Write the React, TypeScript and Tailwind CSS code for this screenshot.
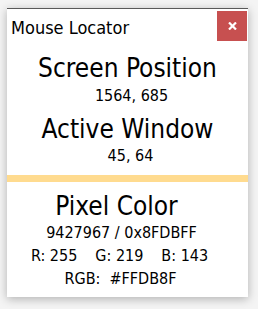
import React from "react";

export default function App() {
  return (
    <div className="w-[258px] h-[309px] bg-[#f4f4f4] pt-[8px] pl-[7px] font-['DejaVu_Sans',sans-serif] [font-stretch:condensed] text-black">
      <div className="w-[241px] h-[289px] bg-white border-t border-[#595959] shadow-[0_2px_9px_rgba(0,0,0,0.28)] flex flex-col">
        <div className="flex h-[32px] pt-[2px] pr-[1px]">
          <div className="flex-1 pl-[4px] pt-[6px] text-[18px] leading-[22px]">Mouse Locator</div>
          <div className="w-[30px] h-[30px] bg-[#c75050] flex items-center justify-center">
            <svg width="9" height="8" viewBox="0 0 9 8">
              <path d="M1 0.5 L8 7.5 M8 0.5 L1 7.5" stroke="white" strokeWidth="2.2" />
            </svg>
          </div>
        </div>
        <div className="flex flex-col items-center mt-[12px]">
          <div className="text-[26px] leading-[30px]">Screen Position</div>
          <div className="text-[16px] leading-[20px] mt-[3px] ml-[8px]">1564, 685</div>
          <div className="text-[26px] leading-[30px] mt-[8px]">Active Window</div>
          <div className="text-[16px] leading-[20px] mt-[2px] ml-[6px]">45, 64</div>
        </div>
        <div className="h-[7px] bg-[#ffdb8f] mt-[9px]"></div>
        <div className="flex flex-col items-center mt-[9px]">
          <div className="text-[26px] leading-[30px] -ml-[22px]">Pixel Color</div>
          <div className="text-[16px] leading-[20px] mt-[2px] -ml-[12px]">9427967 / 0x8FDBFF</div>
          <div className="flex gap-[18px] text-[16px] leading-[20px] mt-[3px] -ml-[16px]">
            <span>R:&nbsp;255</span>
            <span>G:&nbsp;219</span>
            <span>B:&nbsp;143</span>
          </div>
          <div className="text-[16px] leading-[20px] mt-[3px] -ml-[14px]">RGB:&nbsp; #FFDB8F</div>
        </div>
      </div>
    </div>
  );
}
